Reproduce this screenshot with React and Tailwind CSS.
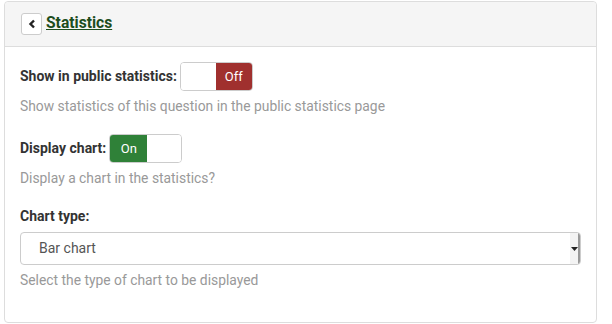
import React from "react";

const Toggle = ({ on }) => (
  <div className="flex h-[29px] w-[73px] overflow-hidden rounded-[4px] border border-[#ccc] bg-white text-[13px] text-white">
    {on ? (
      <>
        <div className="flex w-[37px] items-center justify-center bg-[#2f8138]">On</div>
        <div className="flex-1 bg-white" />
      </>
    ) : (
      <>
        <div className="flex-1 bg-white" />
        <div className="flex w-[36px] items-center justify-center bg-[#a0302e]">Off</div>
      </>
    )}
  </div>
);

export default function App() {
  return (
    <div className="pl-[4px] pt-[1px] font-['Roboto',sans-serif]">
      <div className="flex h-[322px] w-[593px] flex-col rounded-[4px] border border-[#ddd] bg-white">
        <div className="flex h-[45px] items-center gap-[4px] rounded-t-[4px] border-b border-[#ddd] bg-[#f5f5f5] pl-[16px]">
          <div className="flex h-[22px] w-[21px] items-center justify-center rounded-[3px] border border-[#ccc] bg-white">
            <svg width="8" height="10" viewBox="0 0 8 10">
              <path d="M6 1.5 L2.5 5 L6 8.5" fill="none" stroke="#222" strokeWidth="2.4" />
            </svg>
          </div>
          <span className="text-[15.6px] font-bold text-[#1d4d1d] underline">Statistics</span>
        </div>
        <div className="flex flex-col pl-[15px] pr-[15px]">
          <div className="mt-[15px] flex items-center gap-[3px]">
            <span className="text-[14px] font-bold text-[#333]">Show in public statistics:</span>
            <Toggle on={false} />
          </div>
          <div className="mt-[5px] text-[13.85px] leading-[20px] text-[#999]">
            Show statistics of this question in the public statistics page
          </div>
          <div className="mt-[18px] flex items-center gap-[3px]">
            <span className="text-[14px] font-bold text-[#333]">Display chart:</span>
            <Toggle on={true} />
          </div>
          <div className="mt-[5px] text-[13.85px] leading-[20px] text-[#999]">
            Display a chart in the statistics?
          </div>
          <div className="mt-[18px] text-[14px] font-bold leading-[20px] text-[#333]">Chart type:</div>
          <div className="mt-[6px] flex h-[33px] w-[561px] items-center overflow-hidden rounded-[4px] border border-[#ccc] bg-white">
            <span className="flex-1 pl-[18px] text-[14px] text-[#555]">Bar chart</span>
            <div className="flex h-full w-[10px] items-center justify-center border-r-2 border-[#999] bg-[#f3f3f3]">
              <svg width="7" height="4" viewBox="0 0 7 4">
                <path d="M0 0 L7 0 L3.5 4 Z" fill="#222" />
              </svg>
            </div>
          </div>
          <div className="mt-[5px] text-[13.85px] leading-[20px] text-[#999]">
            Select the type of chart to be displayed
          </div>
        </div>
      </div>
    </div>
  );
}
